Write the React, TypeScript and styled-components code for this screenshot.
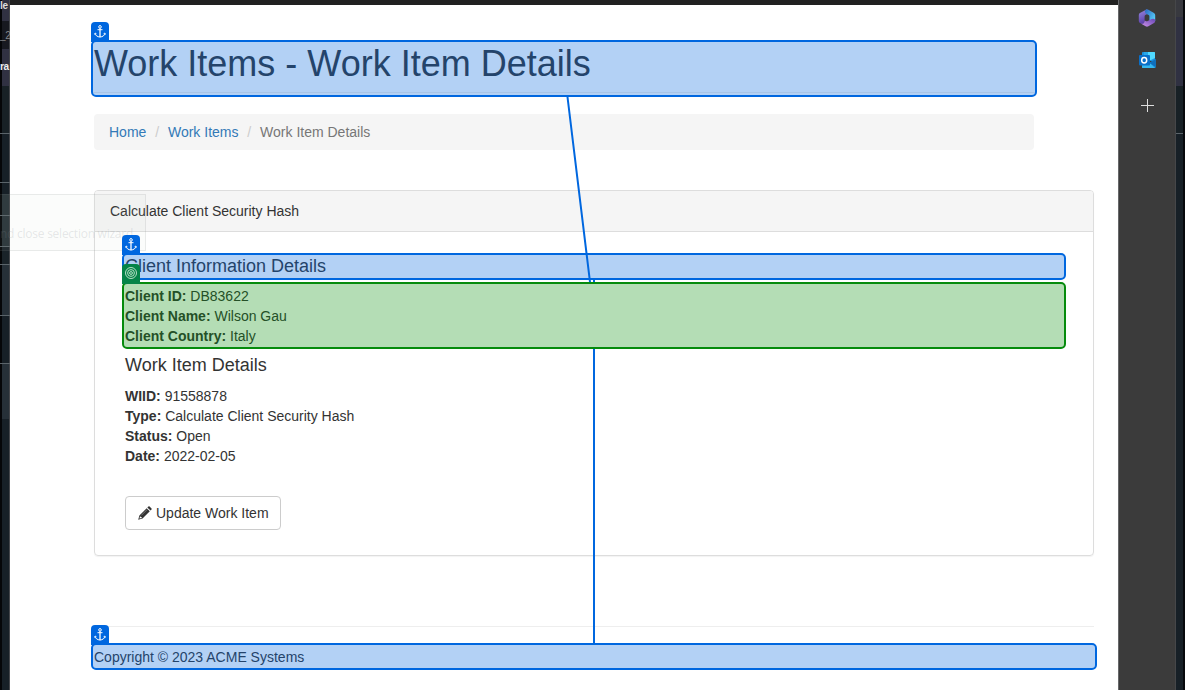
import React from "react";
import styled, { createGlobalStyle } from "styled-components";

const Global = createGlobalStyle`
  * { box-sizing: border-box; }
  body { margin: 0; overflow: hidden; background: #0b0d10; }
  h1, h4, p { margin: 0; font-weight: 400; }
`;

const Window = styled.div`
  position: relative;
  display: flex;
  width: 1185px;
  height: 690px;
  overflow: hidden;
  color: #333;
  font: 14px/20px "Liberation Sans", Arial, sans-serif;
`;

const LeftStrip = styled.div`
  display: flex;
  flex-direction: column;
  flex: 0 0 10px;
  min-width: 0;
`;

const Segment = styled.div<{ $h: number; $bg: string; $line?: boolean }>`
  flex: 0 0 ${(p) => p.$h}px;
  white-space: nowrap;
  background: ${(p) => p.$bg};
  border-bottom: ${(p) => (p.$line ? "1px solid #5b646a" : "0")};
`;

const LeftSegment = styled(Segment)`
  box-shadow: inset 2px 0 #050608, inset -1px 0 #45474b;
`;

const Scrap = styled.span<{ $top: number; $color: string; $bold?: boolean }>`
  display: block;
  padding-top: ${(p) => p.$top}px;
  color: ${(p) => p.$color};
  font: ${(p) => (p.$bold ? 700 : 400)} 10px/12px "Liberation Sans", sans-serif;
  letter-spacing: -0.3px;
`;

const Main = styled.main`
  flex: 0 0 1108px;
  min-width: 0;
  background: #fff;
  border-top: 5px solid #212121;
  padding: 35px 0 0 81px;
`;

const Highlight = styled.div<{ $w: number; $h: number; $green?: boolean }>`
  position: relative;
  width: ${(p) => p.$w}px;
  height: ${(p) => p.$h}px;
  border: 2px solid ${(p) => (p.$green ? "#058b0c" : "#0067df")};
  border-radius: 5px;
  background: ${(p) => (p.$green ? "#b4ddb5" : "#b3d1f5")};
  color: ${(p) => (p.$green ? "#245027" : "#24446b")};
`;

const Tag = styled.span<{ $green?: boolean }>`
  position: absolute;
  z-index: 2;
  left: -2px;
  top: -20px;
  width: 18px;
  height: 20px;
  padding: ${(p) => (p.$green ? "2px" : "3px")} 3px;
  border-radius: 4px 4px 0 0;
  background: ${(p) => (p.$green ? "#058448" : "#0067df")};
  svg { display: block; }
`;

const Title = styled.h1`
  font-size: 36px;
  line-height: 40px;
  padding: 2px 0 0 1px;
  white-space: nowrap;
`;

const TitleRule = styled.div`
  height: 1px;
  margin-top: 8px;
  background: #a8c4e6;
`;

const Breadcrumb = styled.nav`
  display: flex;
  width: 940px;
  height: 36px;
  margin: 17px 0 0 3px;
  padding: 8px 15px;
  border-radius: 4px;
  background: #f5f5f5;
  color: #777;
`;

const Crumb = styled.a`
  color: #337ab7;
`;

const Slash = styled.span`
  width: 21.6px;
  text-align: center;
  color: #ccc;
`;

const Panel = styled.section`
  width: 1000px;
  height: 366px;
  margin: 40px 0 0 3px;
  border: 1px solid #ddd;
  border-radius: 4px;
  box-shadow: 0 1px 1px rgba(0, 0, 0, 0.05);
`;

const PanelHead = styled.header`
  height: 41px;
  padding: 10px 15px;
  border-bottom: 1px solid #ddd;
  border-radius: 3px 3px 0 0;
  background: #f5f5f5;
`;

const PanelBody = styled.div`
  padding: 21px 27px 0;
`;

const Subtitle = styled.h4`
  font-size: 18px;
  line-height: 20px;
`;

const SelectedSubtitle = styled(Subtitle)`
  padding: 1px 0 0 1px;
`;

const ClientBox = styled.div`
  margin-top: 2px;
`;

const Lines = styled.div`
  padding: 2px 0 0 1px;
`;

const WorkDetails = styled.div`
  padding: 6px 0 0 3px;
  h4 { margin-bottom: 11px; }
`;

const UpdateButton = styled.button`
  display: flex;
  align-items: center;
  gap: 4px;
  width: 156px;
  height: 34px;
  margin: 30px 0 0 3px;
  padding: 0 0 0 12px;
  border: 1px solid #ccc;
  border-radius: 4px;
  background: #fff;
  color: #333;
  font: inherit;
  white-space: nowrap;
`;

const FooterRule = styled.div`
  height: 1px;
  width: 1000px;
  margin: 70px 0 16px 3px;
  background: #eee;
`;

const Copyright = styled.p`
  padding: 2px 0 0 1px;
`;

const Connector = styled.svg`
  position: absolute;
  left: 0;
  top: 0;
  pointer-events: none;
`;

const Ghost = styled.div`
  position: absolute;
  left: 0;
  top: 194px;
  width: 146px;
  height: 57px;
  border: 1px solid rgba(120, 130, 130, 0.14);
  border-left: 0;
  background: rgba(190, 205, 195, 0.06);
  color: rgba(135, 140, 145, 0.2);
  font: 12px/16px "Open Sans", sans-serif;
  letter-spacing: -0.25px;
  white-space: nowrap;
  padding: 31px 0 0 0;
`;

const Sidebar = styled.aside`
  display: flex;
  flex-direction: column;
  align-items: center;
  flex: 0 0 58px;
  padding-top: 9px;
  border-left: 1px solid #67686a;
  border-right: 1px solid #464749;
  background: #3b3b3b;
  svg { display: block; }
`;

const Spacer = styled.div<{ $h: number }>`
  flex: 0 0 ${(p) => p.$h}px;
`;

const RightStrip = styled.div`
  display: flex;
  flex-direction: column;
  flex: 0 0 9px;
  border-right: 2px solid #07090c;
`;

const Anchor = () => (
  <svg width="12" height="14" viewBox="0 0 12 14" fill="none" stroke="#fff" strokeWidth="1">
    <circle cx="6" cy="1.9" r="1.3" />
    <path d="M6 3.2V12" strokeWidth="1.3" />
    <path d="M3.5 4.7H8.5M1.1 8.3C1.3 10.6 3.4 11.7 6 12.1C8.6 11.7 10.7 10.6 10.9 8.3" />
    <path d="M.5 9.6L1.1 8L2.5 8.8M11.5 9.6L10.9 8L9.5 8.8" strokeWidth=".8" />
  </svg>
);

const Target = () => (
  <svg width="12" height="14" viewBox="0 0 12 14" fill="none" stroke="#c9e8d2" strokeWidth=".9">
    <circle cx="6" cy="7" r="5.5" />
    <circle cx="6" cy="7" r="3.4" />
    <circle cx="6" cy="7" r="1.4" />
  </svg>
);

const Pencil = () => (
  <svg width="14" height="14" viewBox="0 0 14 14" fill="#333">
    <path d="M9.4 1.5L10.4.5Q11 0 11.6.5L13.5 2.4Q14 3 13.5 3.6L12.5 4.6Z" />
    <path fillRule="evenodd" d="M8.7 2.2L11.8 5.3L4.5 12.6L.2 13.8L1.4 9.5ZM2.1 10.2L1.4 12.6L3.8 11.9L3.5 11L2.9 10.9Z" />
    <path d="M3.3 9.4L9.2 3.5" stroke="#a5a5a5" strokeWidth=".6" />
  </svg>
);

const Copilot365 = () => (
  <svg width="18" height="18" viewBox="0 0 18 18">
    <defs>
      <linearGradient id="armLeft" x1="0" y1="0" x2="0.3" y2="1">
        <stop offset="0" stopColor="#9a8be0" />
        <stop offset="1" stopColor="#5a3da8" />
      </linearGradient>
      <linearGradient id="armRight" x1="0" y1="0" x2="1" y2="0.7">
        <stop offset="0" stopColor="#2a66c0" />
        <stop offset="1" stopColor="#56cbf7" />
      </linearGradient>
      <linearGradient id="armBottom" x1="0" y1="1" x2="1" y2="0">
        <stop offset="0" stopColor="#cf92ea" />
        <stop offset="1" stopColor="#6646b4" />
      </linearGradient>
    </defs>
    <path fill="url(#armLeft)" d="M9 .2L1.9 4Q.8 4.6.8 6V12Q.8 13.3 2 14L4 15Q6.4 15.2 6.6 13V7.4Q6.6 6.5 7.4 6.1L10.6 4.2Z" />
    <path fill="url(#armRight)" d="M7.6.8Q9-.1 10.4.7L16 3.9Q17.2 4.6 17.2 6V12L14 11L11.4 11.4V7.4Q11.4 6.5 10.6 6.1L8 4.7Q6.2 3.4 7.6.8Z" />
    <path fill="url(#armBottom)" d="M17.2 11V12Q17.2 13.3 16 14L10.4 17.3Q9 18 7.6 17.3L3.2 14.7Q6.4 15.3 6.6 11.4L8.3 12.2Q9 12.5 9.7 12.1L13.6 9.9Q16.6 9.2 17.2 11Z" />
  </svg>
);

const Outlook = () => (
  <svg width="17" height="17" viewBox="0 0 17 17">
    <rect x="3" y="0" width="13" height="9" rx=".8" fill="#1a91df" />
    <path fill="#50d9ff" d="M8.5 0H15.2Q16 0 16 .8V6L12 8H8.5Z" />
    <path fill="#28a8ea" d="M5 0H9V4H5Z" />
    <path fill="#1490df" d="M3 8L10 11L16.7 7V15.2Q16.7 16 15.9 16H3.8Q3 16 3 15.2Z" />
    <path fill="#35b8f1" d="M3 11H11L16 16H3.8Q3 16 3 15.2Z" />
    <path fill="#0f6fbd" d="M16.7 7V15L10.5 11Z" />
    <rect x="0" y="3" width="11" height="10.5" rx="1" fill="#0a6fc8" />
    <ellipse cx="5.2" cy="8.2" rx="2.5" ry="2.7" fill="none" stroke="#fff" strokeWidth="1.5" />
  </svg>
);

const Plus = () => (
  <svg width="13" height="13" viewBox="0 0 13 13" stroke="#dedede">
    <path d="M6.5 0V13M0 6.5H13" />
  </svg>
);

export default function App() {
  return (
    <>
      <Global />
      <Window>
        <LeftStrip>
          <LeftSegment $h={21} $bg="#303142"><Scrap $top={0} $color="#ddd" $bold>le</Scrap></LeftSegment>
          <LeftSegment $h={28} $bg="#171920"><Scrap $top={9} $color="#85868a">_2</Scrap></LeftSegment>
          <LeftSegment $h={37} $bg="#303142"><Scrap $top={12} $color="#eee" $bold>ra</Scrap></LeftSegment>
          <LeftSegment $h={48} $bg="#182126" $line />
          <LeftSegment $h={49} $bg="#172027" $line />
          <LeftSegment $h={11} $bg="#172027" />
          <LeftSegment $h={22} $bg="#283238" $line />
          <LeftSegment $h={31} $bg="#283238" $line />
          <LeftSegment $h={18} $bg="#1a2329" $line />
          <LeftSegment $h={51} $bg="#263038" $line />
          <LeftSegment $h={48} $bg="#172027" $line />
          <LeftSegment $h={55} $bg="#263038" />
          <LeftSegment $h={271} $bg="#172027" />
        </LeftStrip>
        <Main>
          <Highlight $w={946} $h={57}>
            <Tag><Anchor /></Tag>
            <Title>Work Items - Work Item Details</Title>
            <TitleRule />
          </Highlight>
          <Breadcrumb>
            <Crumb>Home</Crumb><Slash>/</Slash><Crumb>Work Items</Crumb><Slash>/</Slash>
            <span>Work Item Details</span>
          </Breadcrumb>
          <Panel>
            <PanelHead>Calculate Client Security Hash</PanelHead>
            <PanelBody>
              <Highlight $w={944} $h={27}>
                <Tag><Anchor /></Tag>
                <SelectedSubtitle>Client Information Details</SelectedSubtitle>
              </Highlight>
              <ClientBox>
                <Highlight $w={944} $h={67} $green>
                  <Tag $green><Target /></Tag>
                  <Lines>
                    <p><b>Client ID:</b> DB83622</p>
                    <p><b>Client Name:</b> Wilson Gau</p>
                    <p><b>Client Country:</b> Italy</p>
                  </Lines>
                </Highlight>
              </ClientBox>
              <WorkDetails>
                <Subtitle>Work Item Details</Subtitle>
                <p><b>WIID:</b> 91558878</p>
                <p><b>Type:</b> Calculate Client Security Hash</p>
                <p><b>Status:</b> Open</p>
                <p><b>Date:</b> 2022-02-05</p>
              </WorkDetails>
              <UpdateButton><Pencil />Update Work Item</UpdateButton>
            </PanelBody>
          </Panel>
          <FooterRule />
          <Highlight $w={1006} $h={27}>
            <Tag><Anchor /></Tag>
            <Copyright>Copyright © 2023 ACME Systems</Copyright>
          </Highlight>
        </Main>
        <Sidebar>
          <Copilot365 />
          <Spacer $h={25} />
          <Outlook />
          <Spacer $h={30} />
          <Plus />
        </Sidebar>
        <RightStrip>
          <Segment $h={17} $bg="#38393f" />
          <Segment $h={69} $bg="#303142" />
          <Segment $h={48} $bg="#182126" $line />
          <Segment $h={556} $bg="#172027" />
        </RightStrip>
        <Connector width="1185" height="690" stroke="#0067df" strokeWidth="2" fill="none">
          <path d="M567.5 97L590 282M594 280V282M594 349V643" />
        </Connector>
        <Ghost>nd close selection wizard.</Ghost>
      </Window>
    </>
  );
}
